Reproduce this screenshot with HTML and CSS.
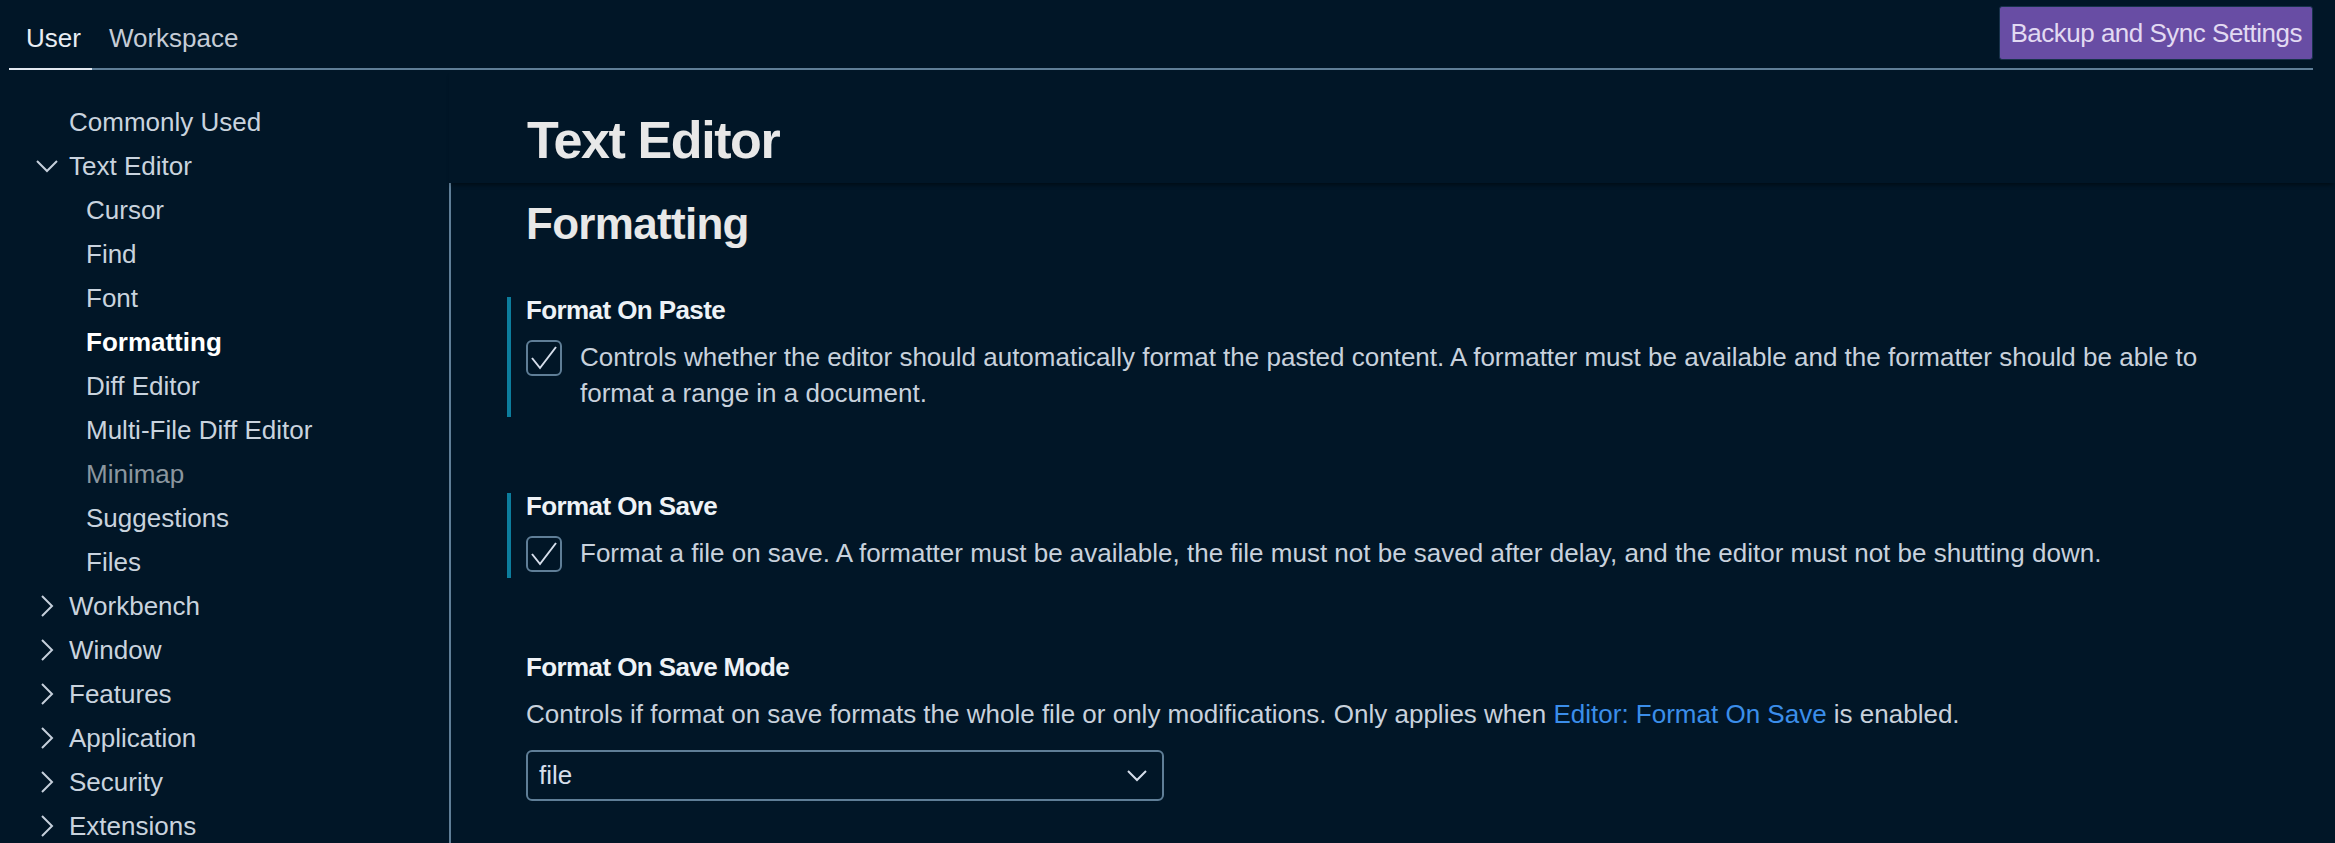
FILE: index.html
```html
<!DOCTYPE html>
<html lang="en">
<head>
<meta charset="utf-8">
<title>Settings</title>
<link rel="stylesheet" href="styles.css">
</head>
<body>
<div class="topbar">
  <div class="tabs">
    <div class="tab active">User</div>
    <div class="tab">Workspace</div>
  </div>
  <button class="sync-btn">Backup and Sync Settings</button>
</div>
<div class="main">
  <nav class="toc">
    <div class="toc-row top plain">Commonly Used</div>
    <div class="toc-row top"><svg class="chev" viewBox="0 0 32 32"><polyline points="6,11 16,21 26,11"/></svg>Text Editor</div>
    <div class="toc-row child">Cursor</div>
    <div class="toc-row child">Find</div>
    <div class="toc-row child">Font</div>
    <div class="toc-row child selected">Formatting</div>
    <div class="toc-row child">Diff Editor</div>
    <div class="toc-row child">Multi-File Diff Editor</div>
    <div class="toc-row child dim">Minimap</div>
    <div class="toc-row child">Suggestions</div>
    <div class="toc-row child">Files</div>
    <div class="toc-row top"><svg class="chev" viewBox="0 0 32 32"><polyline points="11,6 21,16 11,26"/></svg>Workbench</div>
    <div class="toc-row top"><svg class="chev" viewBox="0 0 32 32"><polyline points="11,6 21,16 11,26"/></svg>Window</div>
    <div class="toc-row top"><svg class="chev" viewBox="0 0 32 32"><polyline points="11,6 21,16 11,26"/></svg>Features</div>
    <div class="toc-row top"><svg class="chev" viewBox="0 0 32 32"><polyline points="11,6 21,16 11,26"/></svg>Application</div>
    <div class="toc-row top"><svg class="chev" viewBox="0 0 32 32"><polyline points="11,6 21,16 11,26"/></svg>Security</div>
    <div class="toc-row top"><svg class="chev" viewBox="0 0 32 32"><polyline points="11,6 21,16 11,26"/></svg>Extensions</div>
  </nav>
  <section class="content">
    <header class="content-header">Text Editor</header>
    <div class="tree">
      <h2 class="group-title">Formatting</h2>
      <div class="setting modified">
        <div class="setting-title">Format On Paste</div>
        <div class="setting-row">
          <span class="checkbox"><svg viewBox="0 0 36 36"><polyline points="6,18 14,28 30,7"/></svg></span>
          <div class="desc">Controls whether the editor should automatically format the pasted content. A formatter must be available and the formatter should be able to format a range in a document.</div>
        </div>
      </div>
      <div class="setting modified">
        <div class="setting-title">Format On Save</div>
        <div class="setting-row">
          <span class="checkbox"><svg viewBox="0 0 36 36"><polyline points="6,18 14,28 30,7"/></svg></span>
          <div class="desc">Format a file on save. A formatter must be available, the file must not be saved after delay, and the editor must not be shutting down.</div>
        </div>
      </div>
      <div class="setting">
        <div class="setting-title">Format On Save Mode</div>
        <div class="desc desc-block">Controls if format on save formats the whole file or only modifications. Only applies when <a class="link" href="#">Editor: Format On Save</a> is enabled.</div>
        <div class="select"><span>file</span><svg class="select-chev" viewBox="0 0 20 12"><polyline points="1,1 10,10 19,1"/></svg></div>
      </div>
    </div>
  </section>
</div>
</body>
</html>
```

FILE: styles.css
```css
html, body {
  margin: 0;
  padding: 0;
}

body {
  background: #011627;
  color: #d6deeb;
  font-family: "Liberation Sans", Arial, sans-serif;
  width: 2335px;
  height: 843px;
  overflow: hidden;
}

.topbar {
  display: flex;
  justify-content: space-between;
  align-items: flex-start;
  margin: 0 22px 0 9px;
  height: 68px;
  border-bottom: 2px solid #5f7e97;
}

.tabs {
  display: flex;
  align-self: stretch;
}

.tab {
  padding: 8px 11px 0 17px;
  font-size: 26px;
  line-height: 60px;
  color: #c5ccd6;
}

.tab.active {
  color: #e8edf3;
  border-bottom: 2px solid #e2e8f0;
  margin-bottom: -2px;
}

.sync-btn {
  margin-top: 6px;
  height: 54px;
  padding: 0 10px;
  font-family: inherit;
  font-size: 26px;
  line-height: 52px;
  letter-spacing: -0.5px;
  background: #684da4;
  color: #e2daf2;
  border: 1px solid #17324a;
  border-radius: 3px;
}

.main {
  display: flex;
  height: 773px;
}

.toc {
  width: 449px;
  flex: none;
  padding-top: 30px;
  box-sizing: border-box;
}

.toc-row {
  height: 44px;
  display: flex;
  align-items: center;
  font-size: 26px;
  color: #c9d3de;
  white-space: nowrap;
}

.toc-row.plain {
  padding-left: 69px;
}

.toc-row.child {
  padding-left: 86px;
}

.toc-row.selected {
  color: #ffffff;
  font-weight: 700;
}

.toc-row.dim {
  color: #8b969f;
}

.chev {
  width: 32px;
  height: 32px;
  margin-left: 31px;
  margin-right: 6px;
  flex: none;
}

.chev polyline {
  fill: none;
  stroke: #c5cfdb;
  stroke-width: 2;
}

.content {
  flex: 1;
  display: flex;
  flex-direction: column;
  min-width: 0;
}

.content-header {
  height: 113px;
  box-sizing: border-box;
  padding: 39px 0 0 78px;
  font-size: 52px;
  line-height: 62px;
  font-weight: 700;
  letter-spacing: -1.4px;
  color: #e8e8e8;
  position: relative;
  z-index: 1;
  box-shadow: 0 4px 4px -2px rgba(0, 0, 0, 0.45);
}

.tree {
  flex: 1;
  border-left: 2px solid #5f7e97;
  padding: 15px 75px 0 0;
}

.group-title {
  margin: 0 0 47px;
  padding-left: 75px;
  font-size: 44px;
  line-height: 52px;
  font-weight: 700;
  letter-spacing: -0.7px;
  color: #e8e8e8;
}

.setting {
  margin-left: 56px;
  border-left: 4px solid transparent;
  padding: 0 0 6px 15px;
}

.setting.modified {
  border-left-color: #0c7d9d;
}

.setting + .setting {
  margin-top: 76px;
}

.setting-title {
  font-size: 26px;
  line-height: 26px;
  font-weight: 700;
  letter-spacing: -0.6px;
  color: #eef2f6;
  margin-bottom: 16px;
}

.setting-row {
  display: flex;
  align-items: flex-start;
  gap: 18px;
}

.checkbox {
  width: 36px;
  height: 36px;
  box-sizing: border-box;
  border: 2px solid #5f7e97;
  border-radius: 6px;
  margin-top: 1px;
  flex: none;
  display: block;
}

.checkbox svg {
  display: block;
  width: 36px;
  height: 36px;
  margin: -2px;
}

.checkbox polyline {
  fill: none;
  stroke: #d6deeb;
  stroke-width: 2;
}

.desc {
  font-size: 26px;
  line-height: 36px;
  color: #c8d1dc;
}

.desc-block {
  margin-bottom: 18px;
}

.link {
  color: #3b8eea;
  text-decoration: none;
}

.select {
  width: 638px;
  height: 51px;
  box-sizing: border-box;
  border: 2px solid #5f7e97;
  border-radius: 6px;
  display: flex;
  align-items: center;
  justify-content: space-between;
  padding: 0 15px 0 11px;
  font-size: 26px;
  color: #d6deeb;
}

.select-chev {
  width: 20px;
  height: 12px;
}

.select-chev polyline {
  fill: none;
  stroke: #d6deeb;
  stroke-width: 2;
}
```
